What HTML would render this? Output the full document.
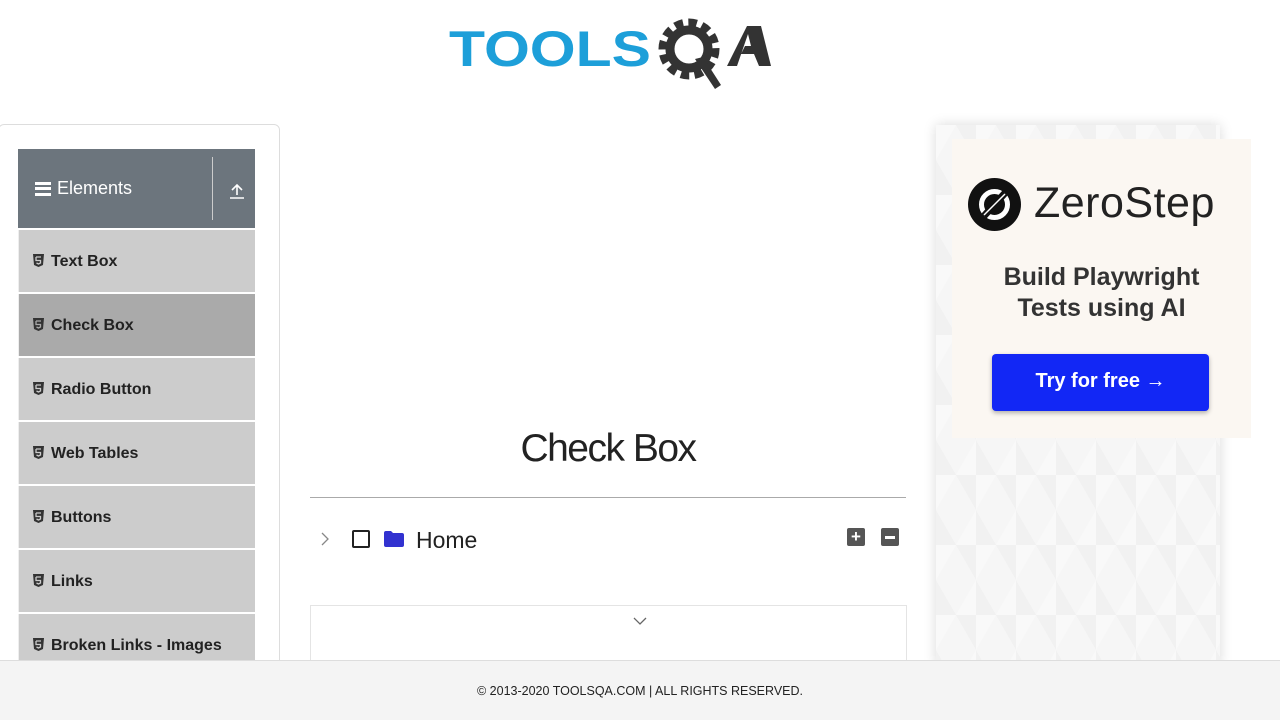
<!DOCTYPE html>
<html style="height:720px;overflow:hidden"><head><meta charset="utf-8"><style>
body{margin:0;width:1280px;height:720px;overflow:hidden;background:#fff;font-family:"Liberation Sans",sans-serif;position:relative}
.abs{position:absolute}
.logo{left:449px;top:16px;width:325px;height:75px}
.card{left:-2px;top:124px;width:280px;height:560px;border:1px solid #ddd;border-radius:6px}
.hdr{left:18px;top:149px;width:237px;height:79px;background:#6c757d;color:#fff}
.item{left:18px;width:236px;height:62px;background:#ccc;border-left:1px solid #eee;font-weight:bold;font-size:16px;color:#222;line-height:64px}
.item svg{margin:0 7px 0 14px;vertical-align:-1px}
.ad{left:936px;top:125px;width:284px;height:540px;background:#f6f6f6;box-shadow:0 0 12px rgba(0,0,0,.15);background-image:linear-gradient(60deg,#f1f1f1 25%,transparent 25%,transparent 75%,#f1f1f1 75%),linear-gradient(120deg,#f9f9f9 25%,transparent 25%,transparent 75%,#f9f9f9 75%);background-size:40px 70px}
.adin{left:952px;top:139px;width:299px;height:299px;background:#fbf7f2}
.foot{left:0;top:660px;width:1280px;height:60px;background:#f4f4f4;border-top:1px solid #ddd;text-align:center;font-size:12.5px;line-height:60px;color:#222;box-sizing:border-box}
</style></head><body>
<svg class="abs logo" viewBox="0 0 325 75">
<text x="0" y="50" font-family="Liberation Sans" font-weight="bold" font-size="50" fill="#1d9fd9" textLength="202" lengthAdjust="spacingAndGlyphs">TOOLS</text>
<g transform="translate(240,33)" fill="#333">
<circle r="25" fill="none" stroke="#333" stroke-width="11" stroke-dasharray="8 5"/>
<circle r="19" fill="none" stroke="#333" stroke-width="9"/>
<path d="M6 10 L26 40 L32 36 L14 8Z"/>
</g>
<path d="M278 50 L298 10 L312 10 L322 50 L310 50 L305 38 L292 38 L296 30 L302 30 L299 18 L288 50Z" fill="#333"/>
</svg>
<div class="abs card"></div>
<div class="abs hdr">
<div class="abs" style="left:17px;top:33px;width:16px;height:14px;border-top:3px solid #fff;border-bottom:3px solid #fff;box-sizing:border-box"></div>
<div class="abs" style="left:17px;top:38px;width:16px;height:3px;background:#fff"></div>
<div class="abs" style="left:39px;top:29px;font-size:18px">Elements</div>
<div class="abs" style="left:194px;top:8px;width:1px;height:63px;background:#ccc"></div>
<svg class="abs" style="left:212px;top:34px" width="14" height="16"><path d="M7 2V12M2 7L7 2L12 7M0 15H14" stroke="#fff" stroke-width="1.6" fill="none"/></svg>
</div>
<div class="abs item" style="top:230px"><svg width="11" height="13" viewBox="0 0 11 13"><path d="M0 0H11L10 11L5.5 13L1 11Z" fill="#333"/><path d="M3 3H8M3 3V6.5H7.5V9L5.5 10L3.5 9" stroke="#ccc" stroke-width="1.3" fill="none"/></svg>Text Box</div>
<div class="abs item" style="top:294px;background:#aaa"><svg width="11" height="13" viewBox="0 0 11 13"><path d="M0 0H11L10 11L5.5 13L1 11Z" fill="#333"/><path d="M3 3H8M3 3V6.5H7.5V9L5.5 10L3.5 9" stroke="#aaa" stroke-width="1.3" fill="none"/></svg>Check Box</div>
<div class="abs item" style="top:358px"><svg width="11" height="13" viewBox="0 0 11 13"><path d="M0 0H11L10 11L5.5 13L1 11Z" fill="#333"/><path d="M3 3H8M3 3V6.5H7.5V9L5.5 10L3.5 9" stroke="#ccc" stroke-width="1.3" fill="none"/></svg>Radio Button</div>
<div class="abs item" style="top:422px"><svg width="11" height="13" viewBox="0 0 11 13"><path d="M0 0H11L10 11L5.5 13L1 11Z" fill="#333"/><path d="M3 3H8M3 3V6.5H7.5V9L5.5 10L3.5 9" stroke="#ccc" stroke-width="1.3" fill="none"/></svg>Web Tables</div>
<div class="abs item" style="top:486px"><svg width="11" height="13" viewBox="0 0 11 13"><path d="M0 0H11L10 11L5.5 13L1 11Z" fill="#333"/><path d="M3 3H8M3 3V6.5H7.5V9L5.5 10L3.5 9" stroke="#ccc" stroke-width="1.3" fill="none"/></svg>Buttons</div>
<div class="abs item" style="top:550px"><svg width="11" height="13" viewBox="0 0 11 13"><path d="M0 0H11L10 11L5.5 13L1 11Z" fill="#333"/><path d="M3 3H8M3 3V6.5H7.5V9L5.5 10L3.5 9" stroke="#ccc" stroke-width="1.3" fill="none"/></svg>Links</div>
<div class="abs item" style="top:614px"><svg width="11" height="13" viewBox="0 0 11 13"><path d="M0 0H11L10 11L5.5 13L1 11Z" fill="#333"/><path d="M3 3H8M3 3V6.5H7.5V9L5.5 10L3.5 9" stroke="#ccc" stroke-width="1.3" fill="none"/></svg>Broken Links - Images</div>
<div class="abs" style="left:310px;top:427px;width:596px;text-align:center;font-size:39px;color:#222;letter-spacing:-1.5px">Check Box</div>
<div class="abs" style="left:310px;top:497px;width:596px;height:1px;background:#aaa"></div>
<svg class="abs" style="left:321px;top:532px" width="8" height="14"><path d="M1 1L7 7L1 13" stroke="#888" stroke-width="1.3" fill="none"/></svg>
<div class="abs" style="left:352px;top:530px;width:14px;height:14px;border:2px solid #222;border-radius:2px"></div>
<svg class="abs" style="left:384px;top:531px" width="20" height="16"><path d="M0 2 Q0 0 2 0 H7 L9 2 H18 Q20 2 20 4 V14 Q20 16 18 16 H2 Q0 16 0 14Z" fill="#3232d0"/></svg>
<div class="abs" style="left:416px;top:527px;font-size:23px;color:#222">Home</div>
<div class="abs" style="left:847px;top:528px;width:18px;height:18px;background:#555;border-radius:2px;color:#fff;text-align:center;font:bold 17px/18px 'Liberation Sans'">+</div>
<div class="abs" style="left:881px;top:528px;width:18px;height:18px;background:#555;border-radius:2px"><div style="margin:8px 4px;height:3px;background:#fff"></div></div>
<div class="abs" style="left:310px;top:605px;width:595px;height:60px;border:1px solid #e4e4e4"></div>
<svg class="abs" style="left:633px;top:617px" width="14" height="8"><path d="M1 1L7 7L13 1" stroke="#666" stroke-width="1.3" fill="none"/></svg>
<div class="abs ad"></div>
<div class="abs adin">
<svg class="abs" style="left:16px;top:39px" width="53" height="53"><circle cx="26.5" cy="26.5" r="26.5" fill="#111"/><circle cx="26.5" cy="26.5" r="13" fill="none" stroke="#fff" stroke-width="5"/><path d="M16 38L37 15" stroke="#111" stroke-width="7"/><path d="M16 37L37 16" stroke="#fff" stroke-width="1.5"/></svg>
<div class="abs" style="left:82px;top:40px;font-size:43px;color:#222;letter-spacing:0.5px">ZeroStep</div>
<div class="abs" style="left:0;top:123px;width:299px;text-align:center;font-size:25px;font-weight:bold;color:#333;line-height:31px">Build Playwright<br>Tests using AI</div>
<div class="abs" style="left:40px;top:215px;width:217px;height:57px;background:#1227f5;border-radius:4px;box-shadow:0 2px 5px rgba(0,0,0,.3);color:#fff;font-weight:bold;font-size:20px;text-align:center;line-height:55px">Try for free &#8594;</div>
</div>
<div class="abs foot">© 2013-2020 TOOLSQA.COM | ALL RIGHTS RESERVED.</div>
</body></html>
